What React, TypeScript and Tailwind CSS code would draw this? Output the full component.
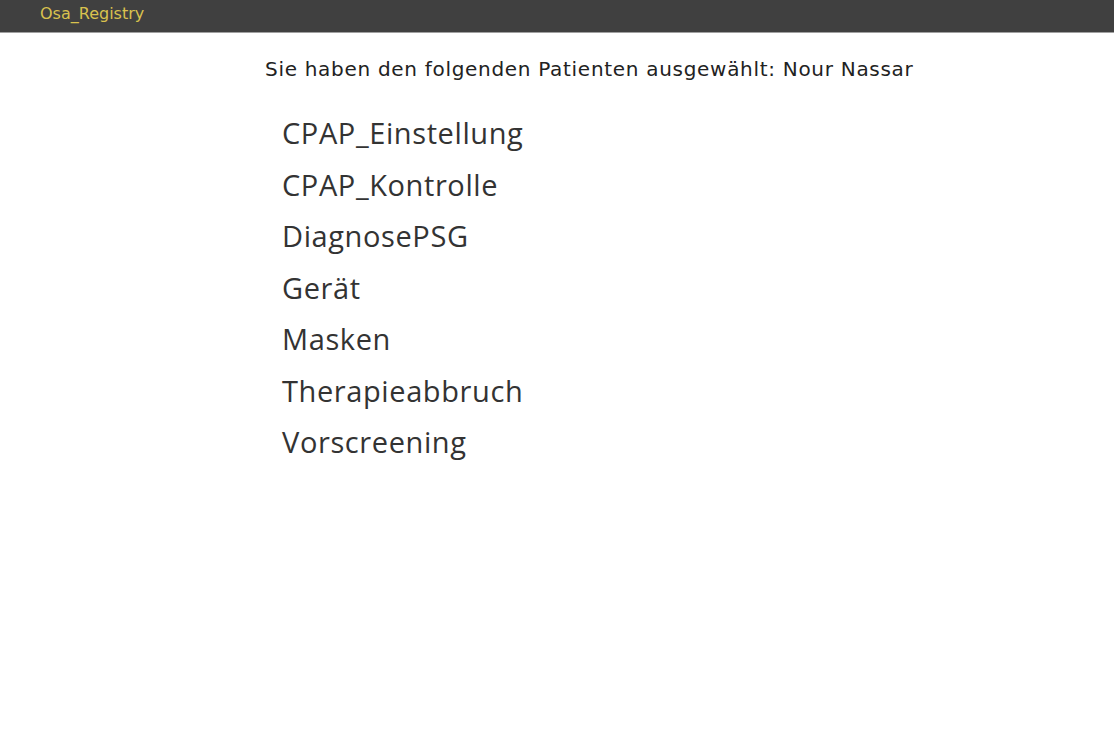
import React from "react";

const forms = [
	"CPAP_Einstellung",
	"CPAP_Kontrolle",
	"DiagnosePSG",
	"Gerät",
	"Masken",
	"Therapieabbruch",
	"Vorscreening",
];

export default function App() {
	return (
		<div className="min-h-screen bg-white">
			<div className="h-[33px] bg-[#404040] border-b border-[#a0a0a0] flex items-center pl-[40px]">
				<span className="text-[#d9c24e] text-[16px] font-['DejaVu_Sans',sans-serif] leading-none pb-[5px]">
					Osa_Registry
				</span>
			</div>
			<div className="pl-[265px] pt-[24px]">
				<p className="text-[#222] text-[20px] tracking-[0.7px] leading-[24px] font-['DejaVu_Sans',sans-serif]">
					Sie haben den folgenden Patienten ausgewählt: Nour Nassar
				</p>
				<ul className="pl-[17px] pt-[26px] flex flex-col">
					{forms.map((f) => (
						<li
							key={f}
							className="text-[#333] text-[29px] tracking-[0.6px] leading-[51.5px] font-['Open_Sans',sans-serif]"
						>
							{f}
						</li>
					))}
				</ul>
			</div>
		</div>
	);
}
